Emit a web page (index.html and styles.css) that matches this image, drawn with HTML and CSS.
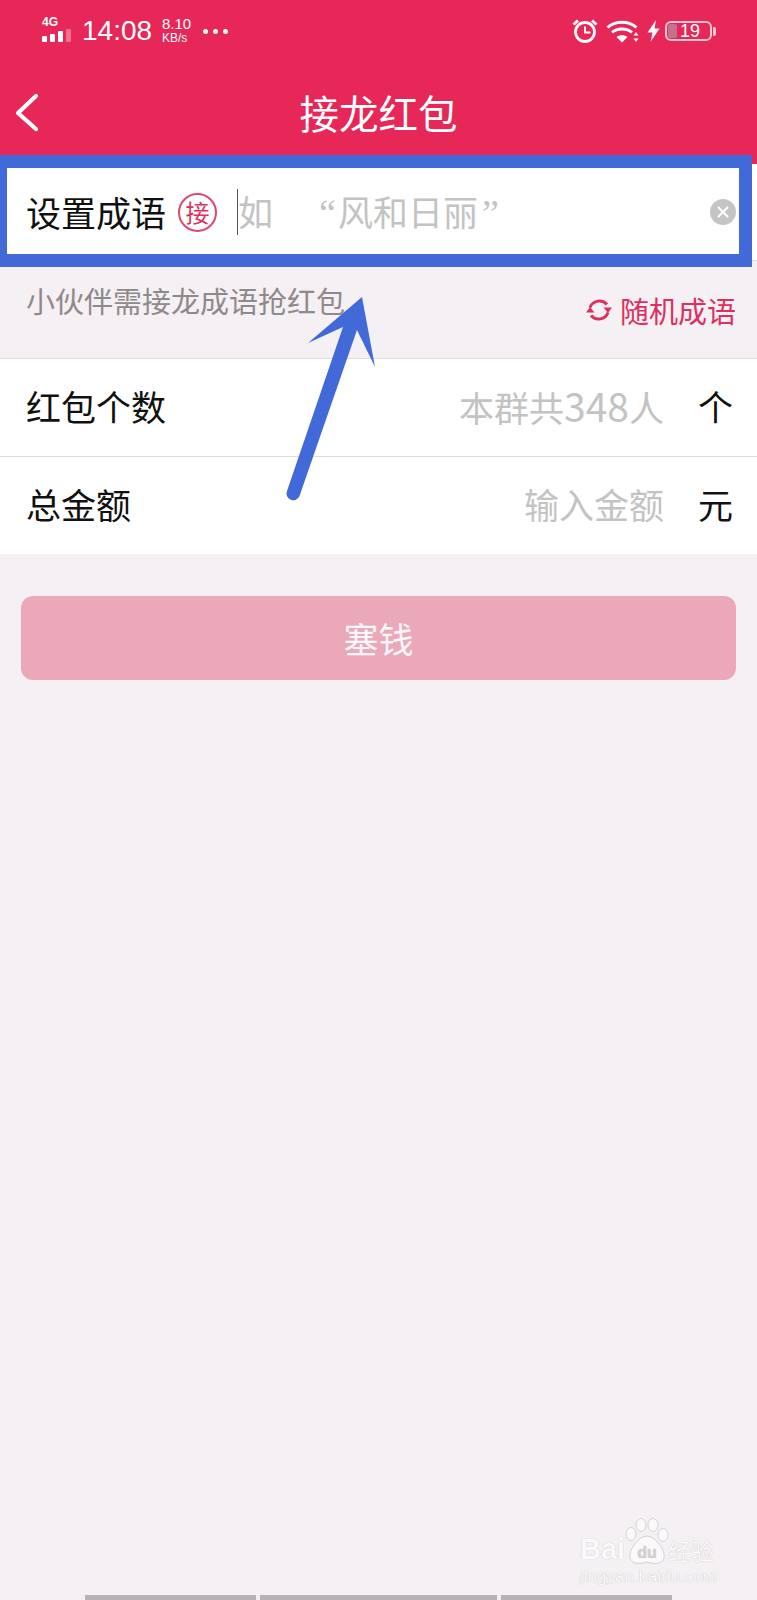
FILE: index.html
```html
<!DOCTYPE html>
<html lang="zh-CN">
<head>
    <meta charset="UTF-8">
    <meta name="viewport" content="width=device-width, initial-scale=1.0">
    <title>接龙红包</title>
    <link rel="stylesheet" href="styles.css">
</head>

<body>
    <div class="page">
        <div class="top">
            <div class="status">
                <div class="net">
                    <span class="net-label">4G</span>
                    <div class="bars">
                        <i class="b1"></i><i class="b2"></i><i class="b3"></i><i class="b4"></i>
                    </div>
                </div>
                <span class="clock">14:08</span>
                <div class="speed">
                    <span class="speed-num">8.10</span>
                    <span class="speed-unit">KB/s</span>
                </div>
                <div class="dots"><i></i><i></i><i></i></div>
                <div class="status-right">
                    <svg class="ic-alarm" width="26" height="26" viewBox="0 0 26 26">
                        <circle cx="13" cy="14" r="9.500" fill="none" stroke="#fff" stroke-width="2.800"/>
                        <path d="M13 8.500V14.500H18.500" fill="none" stroke="#fff" stroke-width="2"/>
                        <path d="M1.500 6.500L6 2.500M24.500 6.500L20 2.500" fill="none" stroke="#fff" stroke-width="3"/>
                    </svg>
                    <svg class="ic-wifi" width="34" height="24" viewBox="0 0 34 24">
                        <path d="M1.500 8.500C9 1.500 23 1.500 30.500 8.500" fill="none" stroke="#fff" stroke-width="2.800"/>
                        <path d="M6 13.500C11 8.800 21 8.800 26 13.500" fill="none" stroke="#fff" stroke-width="2.800"/>
                        <path d="M10.500 18C13.500 15.500 18.500 15.500 21.500 18L16 23.500Z" fill="#fff"/>
                        <path d="M30 13L32.500 16.500H27.500ZM30 23L27.500 19.500H32.500Z" fill="#fff"/>
                    </svg>
                    <svg class="ic-bolt" width="13" height="22" viewBox="0 0 13 22">
                        <path d="M9 0L0.500 12.500H5.500L3.500 22L12.500 8.500H7.500Z" fill="#fff"/>
                    </svg>
                    <div class="battery">
                        <div class="battery-box">
                            <i class="battery-fill"></i>
                            <span>19</span>
                        </div>
                        <i class="battery-tip"></i>
                    </div>
                </div>
            </div>
            <div class="nav">
                <svg class="back" width="24" height="40" viewBox="0 0 24 40">
                    <path d="M21 3L3 20L21 36" fill="none" stroke="#fff" stroke-width="4.200" stroke-linecap="round" stroke-linejoin="round"/>
                </svg>
                <h3 class="title">接龙红包</h3>
            </div>
        </div>

        <div class="row row-idiom">
            <span class="label">设置成语</span>
            <span class="badge">接</span>
            <i class="cursor"></i>
            <span class="holder holder-idiom">如<span class="quote-open">“</span>风和日丽<span class="quote-close">”</span></span>
            <span class="clear">
                <svg width="14" height="14" viewBox="0 0 14 14">
                    <path d="M2 2L12 12M12 2L2 12" stroke="#fff" stroke-width="2"/>
                </svg>
            </span>
        </div>

        <div class="hint">
            <span class="hint-text">小伙伴需接龙成语抢红包</span>
            <div class="random">
                <svg width="26" height="26" viewBox="0 0 26 26">
                    <path d="M4 10.500A10 10 0 0 1 21 7.500M22 15.500A10 10 0 0 1 5 18.500" fill="none" stroke="#dc3160" stroke-width="3"/>
                    <path d="M17.500 10.500H26L22 16ZM8.500 15.500H0L4 10Z" fill="#dc3160"/>
                </svg>
                <span>随机成语</span>
            </div>
        </div>

        <div class="row row-field">
            <span class="label">红包个数</span>
            <span class="holder">本群共<span class="num">348</span>人</span>
            <span class="unit">个</span>
        </div>
        <div class="row row-field">
            <span class="label">总金额</span>
            <span class="holder">输入金额</span>
            <span class="unit">元</span>
        </div>

        <button class="submit">塞钱</button>

        <div class="home-bars">
            <i class="bar-a"></i><i class="bar-b"></i><i class="bar-a"></i>
        </div>
    </div>

    <!-- annotation drawn on top of the screenshot -->
    <div class="mark-box"></div>
    <svg class="mark-arrow" width="100" height="220" viewBox="0 0 100 220">
        <path d="M80 7L93 77L75 40L17.500 206A6.500 6.500 0 0 1 5 201L61 37L26 53Z" fill="#4169d8"/>
    </svg>

    <div class="watermark">
        <div class="wm-top">
            <span class="wm-bai">Bai</span>
            <svg class="wm-paw" width="44" height="48" viewBox="0 0 44 48">
                <g fill="#fbf9fa" stroke="#d6d2d4" stroke-width="1">
                    <ellipse cx="6" cy="16" rx="5" ry="6.500"/>
                    <ellipse cx="16" cy="7" rx="5" ry="6.500"/>
                    <ellipse cx="28" cy="7" rx="5" ry="6.500"/>
                    <ellipse cx="38" cy="17" rx="5" ry="6.500"/>
                    <path d="M22 18C14 18 3 32 5 40C7 47 16 46 22 44C28 46 37 47 39 40C41 32 30 18 22 18Z"/>
                </g>
                <text x="22" y="40" text-anchor="middle" font-family="Liberation Sans" font-size="16" font-weight="bold" fill="#d6d2d4">du</text>
            </svg>
            <span class="wm-jy">经验</span>
        </div>
        <div class="wm-url">jingyan.baidu.com</div>
    </div>
</body>
</html>
```

FILE: styles.css
```css
* {
    box-sizing: border-box;
}

body {
    margin: 0;
    background-color: #f5f0f3;
    font-family: "Noto Sans CJK SC", "Liberation Sans", sans-serif;
    position: relative;
    overflow: hidden;
}

.page {
    height: 1600px;
    display: flex;
    flex-direction: column;
}

.top {
    height: 164px;
    background-color: #e62757;
    color: white;
    flex-shrink: 0;
}

.status {
    height: 70px;
    display: flex;
    align-items: center;
    padding: 0 41px 8px 42px;
    font-family: "Liberation Sans", sans-serif;
}

.net {
    width: 40px;
    display: flex;
    flex-direction: column;
    gap: 1px;
    margin-top: -4px;
}

.net-label {
    font-size: 12px;
    line-height: 12px;
    font-weight: bold;
}

.bars {
    display: flex;
    align-items: flex-end;
    gap: 3px;
    height: 13px;
}

.bars i {
    width: 5px;
    background-color: white;
    border-radius: 1px;
}

.b1 { height: 6px; }
.b2 { height: 8px; }
.b3 { height: 11px; }
.bars .b4 { height: 13px; opacity: 0.35; }

.clock {
    font-size: 28px;
    width: 80px;
}

.speed {
    width: 41px;
    display: flex;
    flex-direction: column;
    line-height: 14px;
}

.speed-num {
    font-size: 15px;
}

.speed-unit {
    font-size: 12px;
}

.dots {
    display: flex;
    gap: 5px;
}

.dots i {
    width: 5px;
    height: 5px;
    border-radius: 50%;
    background-color: white;
}

.status-right {
    margin-left: auto;
    display: flex;
    align-items: center;
}

.ic-alarm { margin-right: 8px; }
.ic-wifi { margin-right: 7px; }
.ic-bolt { margin-right: 5px; }

.battery {
    display: flex;
    align-items: center;
    gap: 1px;
}

.battery-box {
    width: 47px;
    height: 20px;
    border: 2px solid #f6c6d2;
    border-radius: 6px;
    position: relative;
    text-align: center;
    font-size: 18px;
    line-height: 16px;
    padding-left: 3px;
}

.battery-fill {
    position: absolute;
    left: 1px;
    top: 1px;
    bottom: 1px;
    width: 9px;
    border-radius: 2px;
    background-color: #c4728b;
}

.battery-box span {
    position: relative;
}

.battery-tip {
    width: 3px;
    height: 9px;
    border-radius: 0 2px 2px 0;
    background-color: #f6c6d2;
}

.nav {
    height: 94px;
    display: flex;
    align-items: center;
    justify-content: center;
    position: relative;
    padding-bottom: 11px;
}

.back {
    position: absolute;
    left: 15px;
    top: 23px;
}

.title {
    margin: 0;
    font-size: 39.500px;
    line-height: 50px;
    font-weight: 400;
}

.row {
    display: flex;
    align-items: center;
    background-color: white;
    flex-shrink: 0;
    padding: 0 24px 0 26px;
}

.label {
    font-size: 35px;
    line-height: 48px;
    color: #111;
}

.holder {
    font-size: 35px;
    line-height: 48px;
    color: #c3c3c3;
}

.num {
    font-size: 39px;
}

.row-idiom {
    height: 97px;
    padding-right: 21px;
    border-bottom: 1px solid #ddd;
}

.badge {
    width: 39px;
    height: 39px;
    margin-left: 12px;
    border: 2px solid #dc4a70;
    border-radius: 50%;
    color: #dc3160;
    font-size: 24px;
    line-height: 33px;
    text-align: center;
    flex-shrink: 0;
}

.cursor {
    width: 1px;
    height: 46px;
    margin-left: 20px;
    background-color: #555;
}

.holder-idiom {
    white-space: nowrap;
}

.quote-open {
    margin-left: 46px;
    margin-right: 2px;
    font-family: "Liberation Serif", serif;
    font-size: 38px;
}

.quote-close {
    font-family: "Liberation Serif", serif;
    font-size: 38px;
    margin-left: 4px;
}

.clear {
    width: 26px;
    height: 26px;
    margin-left: auto;
    border-radius: 50%;
    background-color: #c4c4c4;
    display: flex;
    align-items: center;
    justify-content: center;
}

.hint {
    height: 97px;
    display: flex;
    justify-content: space-between;
    padding: 18px 21px 0 26px;
    flex-shrink: 0;
}

.hint-text {
    font-size: 29px;
    line-height: 42px;
    color: #8e8a8c;
}

.random {
    display: flex;
    align-items: center;
    gap: 8px;
    height: 42px;
    margin-top: 10px;
    color: #dc3160;
    font-size: 29px;
}

.row-field {
    height: 98px;
    border-top: 1px solid #ddd;
    padding-bottom: 4px;
}

.row-field .holder {
    margin-left: auto;
}

.unit {
    width: 35px;
    margin-left: 34px;
    font-size: 35px;
    line-height: 48px;
    color: #111;
}

.submit {
    height: 84px;
    margin: 42px 21px 0 21px;
    padding-bottom: 2px;
    background-color: #eaa8b9;
    color: #fdf8fa;
    border: none;
    border-radius: 12px;
    font-family: inherit;
    font-size: 35px;
    flex-shrink: 0;
}

.home-bars {
    margin-top: auto;
    padding-left: 85px;
    display: flex;
    gap: 4px;
}

.home-bars i {
    height: 5px;
    background-color: #b7b2b4;
}

.bar-a { width: 171px; }
.bar-b { width: 237px; }

.mark-box {
    position: absolute;
    left: -6px;
    top: 155px;
    width: 758px;
    height: 112px;
    border: 13px solid #4169d8;
}

.mark-arrow {
    position: absolute;
    left: 282px;
    top: 290px;
}

.watermark {
    position: absolute;
    left: 580px;
    top: 1518px;
    width: 140px;
    color: #fbf9fa;
    text-shadow: 0 0 1px #b9b4b6;
}

.wm-top {
    display: flex;
    align-items: flex-end;
    height: 48px;
}

.wm-bai {
    font-family: "Liberation Sans", sans-serif;
    font-size: 29px;
    line-height: 34px;
    font-weight: bold;
    width: 46px;
}

.wm-paw {
    margin-left: -1px;
}

.wm-jy {
    font-size: 23px;
    line-height: 32px;
    margin-left: -1px;
}

.wm-url {
    font-family: "Liberation Sans", sans-serif;
    font-size: 17px;
    line-height: 20px;
    margin-top: 1px;
    white-space: nowrap;
}
```
